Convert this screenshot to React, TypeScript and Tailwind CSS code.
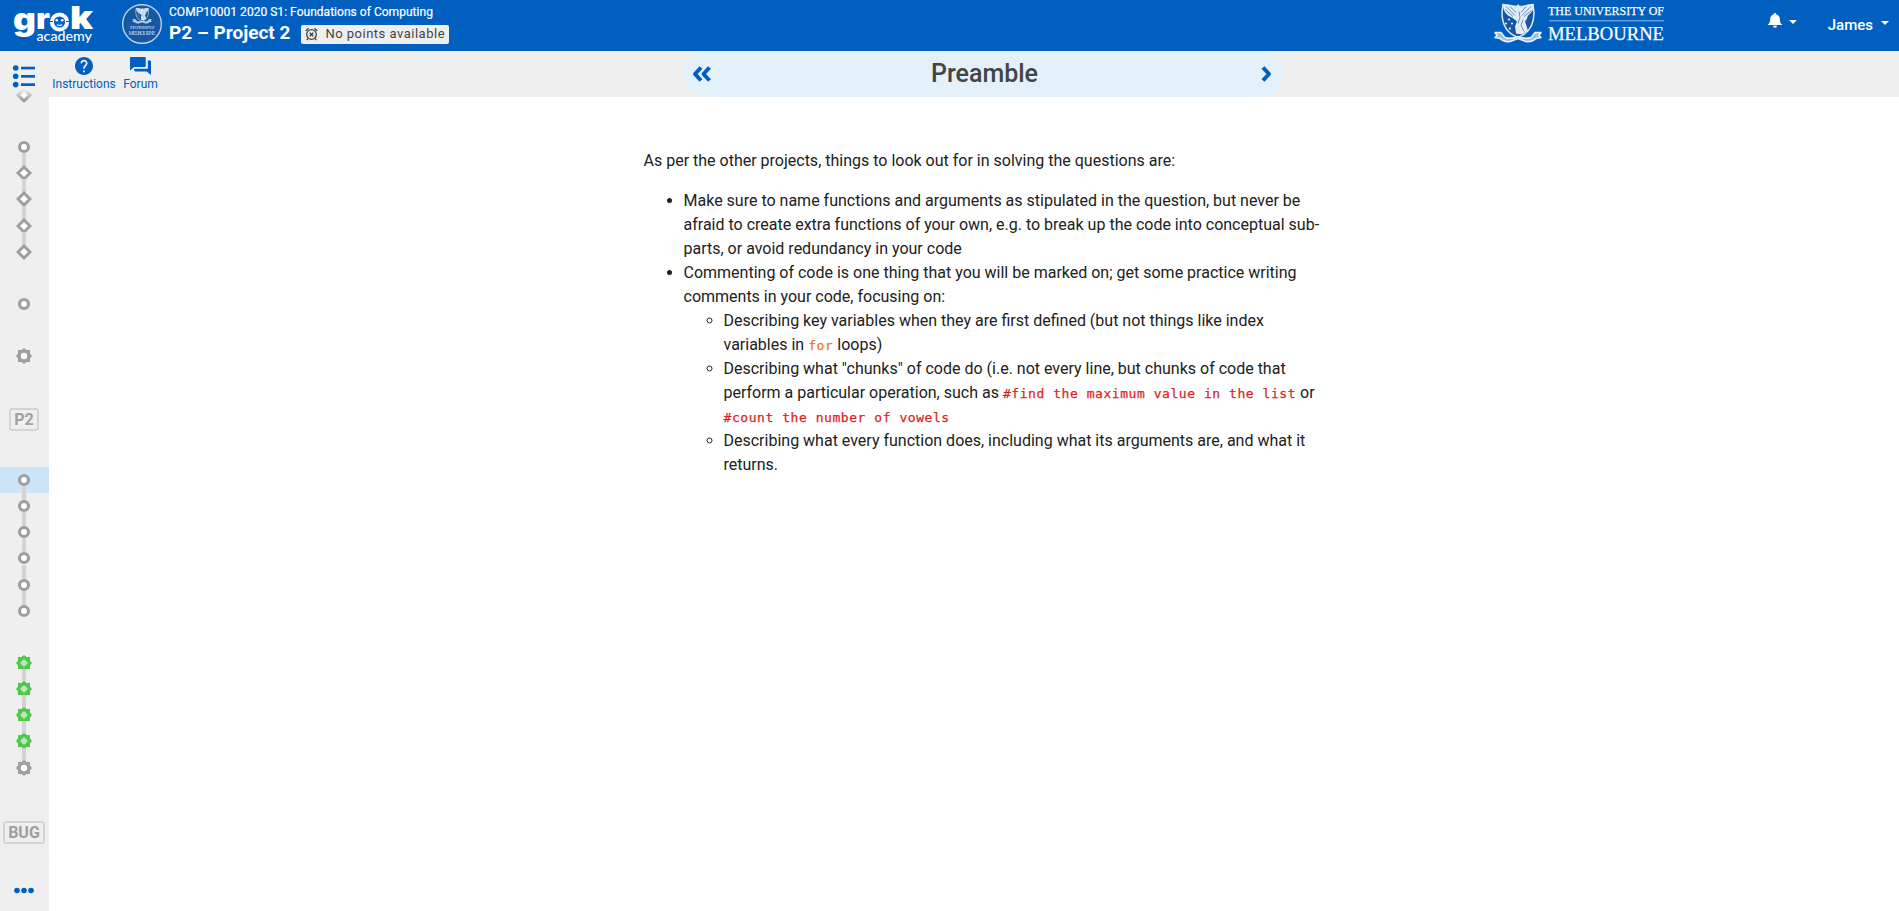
import React from "react";

type Shape = "circle" | "diamond" | "gear" | "done";

function Marker({ shape }: { shape: Shape }) {
  const gear = "M2 2H5.500L8 0L10.500 2H14V5.500L16 8L14 10.500V14H10.500L8 16L5.500 14H2V10.500L0 8L2 5.500Z";
  return (
    <svg width="16" height="16" viewBox="0 0 16 16" className="relative block">
      {shape === "circle" && <circle cx="8" cy="8" r="4.5" fill="#fff" stroke="#9f9f9f" strokeWidth="3.2" />}
      {shape === "diamond" && <path d="M8 2 L14 8 L8 14 L2 8 Z" fill="#fff" stroke="#9f9f9f" strokeWidth="3" />}
      {shape === "gear" && (
        <>
          <path d={gear} fill="#9f9f9f" />
          <circle cx="8" cy="8" r="3.2" fill="#fff" />
        </>
      )}
      {shape === "done" && (
        <>
          <path d={gear} fill="#4fc74f" />
          <path d="M8 4 L12 8 L8 12 L4 8 Z" fill="#b9ebb9" />
        </>
      )}
    </svg>
  );
}

function Group({ items, active = false }: { items: Shape[]; active?: boolean }) {
  return (
    <div className="flex flex-col">
      {items.map((shape, i) => (
        <div
          key={i}
          className={
            active && i === 0
              ? "flex h-[26.2px] flex-col items-center justify-center bg-[#cce4f7] pr-px"
              : "flex h-[26.2px] flex-col items-center justify-center pr-px"
          }
        >
          <div className="relative">
            {i > 0 && <div className="absolute -top-3 left-1.5 h-4 w-1 bg-[#d4d4d4]" />}
            <Marker shape={shape} />
          </div>
        </div>
      ))}
    </div>
  );
}

function ModuleLabel({ children }: { children: string }) {
  return (
    <div className="flex h-[50px] shrink-0 items-center justify-center border-y border-[#ececec] pr-px">
      <span className="rounded-[3px] border-2 border-[#d4d4d4] px-[3.5px] text-[16px] leading-[19px] font-bold text-[#9f9f9f]">
        {children}
      </span>
    </div>
  );
}

function GrokLogo() {
  return (
    <svg width="80" height="51" viewBox="0 0 80 51" fill="#fff" className="block overflow-visible">
      <g fontFamily="Inter, sans-serif" fontWeight="900">
        <text x="-1" y="30" fontSize="31" textLength="23" lengthAdjust="spacingAndGlyphs">g</text>
        <text x="22" y="29" fontSize="29" textLength="14" lengthAdjust="spacingAndGlyphs">r</text>
        <text x="56" y="29" fontSize="32" textLength="23" lengthAdjust="spacingAndGlyphs">k</text>
      </g>
      <circle cx="45.5" cy="22" r="7.6" fill="none" stroke="#fff" strokeWidth="4" />
      <circle cx="42.8" cy="20.300" r="1.3" />
      <circle cx="48.2" cy="20.300" r="1.3" />
      <path d="M42.800 24.700 Q45.500 26 48.200 24.700" stroke="#fff" strokeWidth="1.2" fill="none" />
      <path d="M36 21.500 h3 M52 21.500 h3" stroke="#005fbf" strokeWidth="1" />
      <text x="22.5" y="41" fontSize="13" fontFamily="Lato, sans-serif" fontWeight="500" textLength="55.5" lengthAdjust="spacingAndGlyphs">
        academy
      </text>
    </svg>
  );
}

function Crest() {
  return (
    <>
      <path d="M9 2 Q24 6 39 2 L40 10 Q40 29 24 35 Q8 29 8 10 Z" fill="#17579f" stroke="#dce9f6" strokeWidth="1.5" />
      <path d="M9 2 Q17 1 22 5 L24 1.500 L27 5 Q32 1 40 2 Q40 9 34 13 Q33 17 31 19 L34 28 L28 32 L22 31 L21 24 L23 19 Q19 15 14 13 Q9 9 9 2Z" fill="#e4edf7" />
      <path
        d="M12 4 L21 13 M11 7 L19 14 M16 4 L22 10 M37 4 L28 13 M37.500 8 L30 14 M32 4 L27 10 M25 9 L26 15 L24 21 M29 17 L27 23 L30 29"
        stroke="#5d8fc5"
        strokeWidth="1"
        fill="none"
      />
      <g fill="#e4edf7">
        <circle cx="15" cy="17" r="1.1" />
        <circle cx="12" cy="21" r="1.1" />
        <circle cx="18" cy="21" r="1.1" />
        <circle cx="16" cy="26" r="1.1" />
      </g>
      <path
        d="M1 30 L7 30 L11 35 Q17 37 24 34 Q31 37 37 35 L41 30 L47 30 L45 33 L47 35 L42 36 Q38 40 32 39 L24 36 L16 39 Q10 40 6 36 L1 35 L3 33Z"
        fill="#9cbfe4"
        stroke="#eef4fb"
        strokeWidth="1.4"
        strokeLinejoin="round"
      />
    </>
  );
}

function Caret() {
  return (
    <svg width="8" height="4" viewBox="0 0 8 4" className="block">
      <path d="M0 0H8L4 4Z" fill="#fff" />
    </svg>
  );
}

function Header() {
  return (
    <header className="flex h-[51px] shrink-0 bg-[#005fbf] text-white">
      <div className="w-[121px] pl-[14px]">
        <GrokLogo />
      </div>
      <svg width="42" height="42" viewBox="0 0 42 42" className="mt-[3px] block shrink-0">
        <circle cx="21" cy="21" r="19.3" fill="#17579f" stroke="#b9d3ed" strokeWidth="1.4" />
        <g transform="translate(11.5 4.5) scale(0.4)">
          <Crest />
        </g>
        <g fill="#c8dbef" fontFamily="Liberation Serif, serif" textAnchor="middle">
          <text x="21" y="25.5" fontSize="3.8" textLength="25">THE UNIVERSITY OF</text>
          <text x="21" y="31.5" fontSize="5.8" textLength="27">MELBOURNE</text>
        </g>
      </svg>
      <div className="flex flex-col pl-[6px]">
        <div className="mt-1 text-[12px] leading-4 tracking-[0.03px] [-webkit-text-stroke:0.2px_currentColor]">
          COMP10001 2020 S1: Foundations of Computing
        </div>
        <div className="flex items-center">
          <h1 className="text-[19px] leading-[25px] font-bold">P2 – Project 2</h1>
          <div className="mt-[3px] ml-[11px] flex h-[19px] w-[148px] items-center rounded-[2px] bg-[#efefef] pl-1 text-[13px] tracking-[0.5px] text-[#444]">
            <svg width="13" height="14" viewBox="0 0 13 14" fill="none" stroke="#444" strokeWidth="1.3" className="mr-[7px] shrink-0">
              <circle cx="6.5" cy="7.5" r="4.8" />
              <path d="M4.700 5.700 L8.300 9.300 M8.300 5.700 L4.700 9.300" strokeWidth="1.5" />
              <path d="M0.800 4 L3.500 1.200 M12.200 4 L9.500 1.200 M3 11.400 L1.800 13 M10 11.400 L11.200 13" />
            </svg>
            <span className="whitespace-nowrap">No points available</span>
          </div>
        </div>
      </div>
      <div className="ml-auto flex">
        <svg width="174" height="48" viewBox="0 0 174 48" className="block overflow-visible">
          <g transform="translate(0 2.5)">
            <Crest />
          </g>
          <g fill="#fff" stroke="#fff" strokeWidth="0.25" fontFamily="Liberation Serif, serif">
            <text x="54" y="15" fontSize="13.5" textLength="116" lengthAdjust="spacingAndGlyphs">THE UNIVERSITY OF</text>
            <text x="54" y="39.500" fontSize="19" textLength="116" lengthAdjust="spacingAndGlyphs">MELBOURNE</text>
          </g>
          <rect x="55" y="20.300" width="115" height="1" fill="#8fb9e3" />
        </svg>
        <div className="ml-[99px] flex pt-[13px]">
          <svg width="16" height="15" viewBox="0 0 16 15" fill="#fff" className="block">
            <path d="M8 0 C8.800 0 9.200 .5 9.200 1.200 C11.600 1.800 12.800 3.700 12.800 6 C12.800 8.700 13.400 10.400 15.500 12 H0.500 C2.600 10.400 3.200 8.700 3.200 6 C3.200 3.700 4.400 1.800 6.800 1.200 C6.800 .5 7.200 0 8 0Z" />
            <path d="M6 12.700 H10 A2 2 0 0 1 6 12.700Z" />
          </svg>
          <div className="pt-[7px] pl-[6px]">
            <Caret />
          </div>
        </div>
        <div className="ml-[31px] flex pr-[10px]">
          <span className="pt-[15px] text-[15px] leading-5 font-medium">James</span>
          <div className="pt-[21px] pl-[8px]">
            <Caret />
          </div>
        </div>
      </div>
    </header>
  );
}

function Sidebar() {
  return (
    <nav className="flex h-full w-[49px] shrink-0 flex-col bg-[#efefef]">
      <svg width="49" height="53" viewBox="0 0 49 53" className="block shrink-0">
        <defs>
          <linearGradient id="fade" x1="0" x2="0" y1="0" y2="1">
            <stop offset="0.3" stopColor="#efefef" />
            <stop offset="0.9" stopColor="#efefef" stopOpacity="0" />
          </linearGradient>
        </defs>
        <path d="M24 38 L30 44 L24 50 L18 44 Z" fill="#fff" stroke="#9f9f9f" strokeWidth="3" />
        <rect x="12" y="34" width="24" height="16" fill="url(#fade)" />
        <g fill="#005fbf">
          <circle cx="15.7" cy="17" r="2.8" />
          <circle cx="15.7" cy="25.3" r="2.8" />
          <circle cx="15.7" cy="33.6" r="2.8" />
          <rect x="21" y="15.7" width="14" height="2.7" />
          <rect x="21" y="24" width="14" height="2.7" />
          <rect x="21" y="32.3" width="14" height="2.7" />
        </g>
      </svg>
      <div className="h-[30px]" />
      <Group items={["circle", "diamond", "diamond", "diamond", "diamond"]} />
      <div className="h-[26px]" />
      <Group items={["circle"]} />
      <div className="h-[26px]" />
      <Group items={["gear"]} />
      <div className="h-[25.6px]" />
      <ModuleLabel>P2</ModuleLabel>
      <div className="h-[21.8px]" />
      <Group items={["circle", "circle", "circle", "circle", "circle", "circle"]} active />
      <div className="h-[26px]" />
      <Group items={["done", "done", "done", "done", "gear"]} />
      <div className="h-[26.6px]" />
      <ModuleLabel>BUG</ModuleLabel>
      <svg width="48" height="53" viewBox="0 0 48 53" fill="#005fbf" className="mt-auto block shrink-0">
        <circle cx="17" cy="32.500" r="2.8" />
        <circle cx="24" cy="32.500" r="2.8" />
        <circle cx="31" cy="32.500" r="2.8" />
      </svg>
    </nav>
  );
}

function Toolbar() {
  return (
    <div className="flex h-[46px] shrink-0 bg-[#efefef] text-[12px] leading-4 text-[#005fbf]">
      <div className="ml-[3px] flex w-[64px] flex-col items-center">
        <svg width="18" height="18" viewBox="2 2 20 20" fill="#005fbf" className="mt-[6px] mb-px">
          <path d="M12 2C6.48 2 2 6.48 2 12s4.480 10 10 10 10-4.480 10-10S17.520 2 12 2zm1 17h-2v-2h2v2zm2.070-7.750l-.9.920C13.450 12.900 13 13.500 13 15h-2v-.5c0-1.100.450-2.100 1.170-2.830l1.240-1.260c.370-.360.590-.860.590-1.410 0-1.100-.9-2-2-2s-2 .9-2 2H8c0-2.210 1.790-4 4-4s4 1.790 4 4c0 .880-.360 1.680-.930 2.250z" />
        </svg>
        Instructions
      </div>
      <div className="ml-[7px] flex w-[35px] flex-col items-center">
        <svg width="21" height="18" viewBox="2 2 20 20" preserveAspectRatio="none" fill="#005fbf" className="mt-[6px] mb-px">
          <path d="M21 6h-2v9H6v2c0 .55.45 1 1 1h11l4 4V7c0-.55-.45-1-1-1zm-4 6V3c0-.55-.45-1-1-1H3c-.55 0-1 .45-1 1v14l4-4h10c.55 0 1-.45 1-1z" />
        </svg>
        Forum
      </div>
      <div className="ml-[526px] flex w-[600px] items-center rounded-[23px] bg-[#e4f1fb] pr-[12px] pl-[8px]">
        <svg width="19" height="16" viewBox="0 0 19 16" fill="none" stroke="#005fbf" strokeWidth="4" strokeLinejoin="round">
          <path d="M9 1.500 L3 8 L9 14.500 M17.500 1.500 L11.500 8 L17.500 14.500" />
        </svg>
        <h2 className="flex-1 pr-[3px] text-center text-[25px] leading-8 font-medium text-[#444]">Preamble</h2>
        <svg width="11" height="16" viewBox="0 0 11 16" fill="none" stroke="#005fbf" strokeWidth="4" strokeLinejoin="round">
          <path d="M2 1.500 L8 8 L2 14.500" />
        </svg>
      </div>
    </div>
  );
}

function Code({ children, className }: { children: string; className: string }) {
  return (
    <code
      className={`font-['DejaVu_Sans_Mono',monospace] text-[13px] leading-none tracking-[0.55px] [-webkit-text-stroke:0.25px_currentColor] ${className}`}
    >
      {children}
    </code>
  );
}

export default function App() {
  return (
    <div className="flex h-[911px] w-[1899px] flex-col overflow-hidden bg-white font-[Roboto,sans-serif]">
      <Header />
      <div className="flex min-h-0 flex-1">
        <Sidebar />
        <main className="flex min-w-0 flex-1 flex-col">
          <Toolbar />
          <article className="ml-[594.5px] w-[680px] pt-[51.5px] text-[16px] leading-6 text-[#212121]">
            <p className="mb-4">As per the other projects, things to look out for in solving the questions are:</p>
            <ul className="list-disc pl-10">
              <li>
                Make sure to name functions and arguments as stipulated in the question, but never be afraid to create extra
                functions of your own, e.g. to break up the code into conceptual sub-parts, or avoid redundancy in your code
              </li>
              <li>
                Commenting of code is one thing that you will be marked on; get some practice writing comments in your code,
                focusing on:
                <ul className="list-[circle] pl-10">
                  <li>
                    Describing key variables when they are first defined (but not things like index variables in{" "}
                    <Code className="text-[#f57223]">for</Code> loops)
                  </li>
                  <li>
                    Describing what "chunks" of code do (i.e. not every line, but chunks of code that perform a particular
                    operation, such as <Code className="text-[#dd1f1f]">#find the maximum value in the list</Code> or{" "}
                    <Code className="text-[#dd1f1f]">#count the number of vowels</Code>
                  </li>
                  <li>Describing what every function does, including what its arguments are, and what it returns.</li>
                </ul>
              </li>
            </ul>
          </article>
        </main>
      </div>
    </div>
  );
}
